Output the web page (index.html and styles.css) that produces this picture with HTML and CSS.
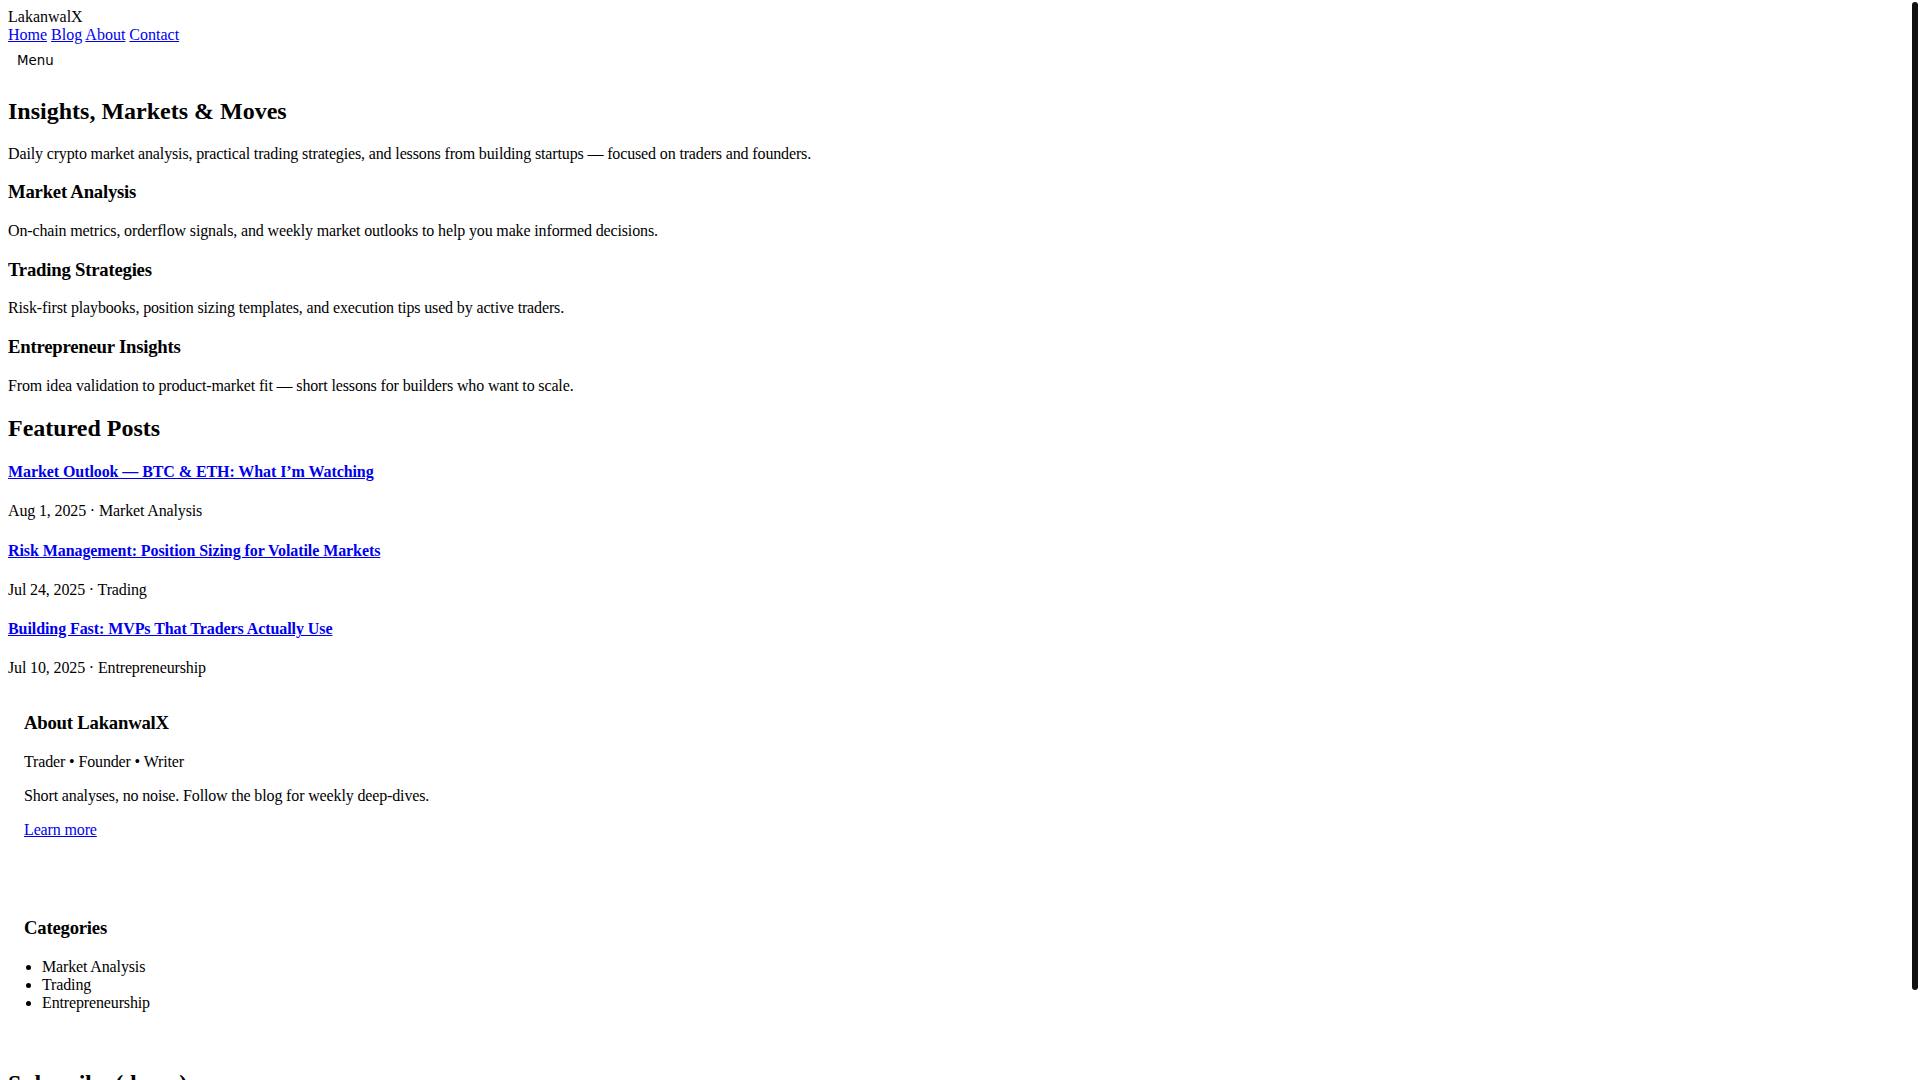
FILE: index.html
```html
<!DOCTYPE html>
<html lang="en">
<head>
<meta charset="utf-8">
<title>LakanwalX — Insights, Markets &amp; Moves</title>
<link rel="stylesheet" href="styles.css">
</head>
<body>
<header class="site-header">
  <div class="brand">LakanwalX</div>
  <nav class="site-nav"><a href="#">Home</a> <a href="#">Blog</a> <a href="#">About</a> <a href="#">Contact</a></nav>
  <button class="menu-toggle" type="button">Menu</button>
</header>

<main class="content">
  <section class="hero">
    <h1 class="hero-title">Insights, Markets &amp; Moves</h1>
    <p>Daily crypto market analysis, practical trading strategies, and lessons from building startups — focused on traders and founders.</p>
  </section>

  <section class="topics">
    <h3 class="topic-title">Market Analysis</h3>
    <p>On-chain metrics, orderflow signals, and weekly market outlooks to help you make informed decisions.</p>
    <h3 class="topic-title">Trading Strategies</h3>
    <p>Risk-first playbooks, position sizing templates, and execution tips used by active traders.</p>
    <h3 class="topic-title">Entrepreneur Insights</h3>
    <p>From idea validation to product-market fit — short lessons for builders who want to scale.</p>
  </section>

  <section class="featured">
    <h2 class="section-title">Featured Posts</h2>
    <article class="post">
      <h4 class="post-title"><a href="#">Market Outlook — BTC &amp; ETH: What I’m Watching</a></h4>
      <p class="post-meta">Aug 1, 2025 · Market Analysis</p>
    </article>
    <article class="post">
      <h4 class="post-title"><a href="#">Risk Management: Position Sizing for Volatile Markets</a></h4>
      <p class="post-meta">Jul 24, 2025 · Trading</p>
    </article>
    <article class="post">
      <h4 class="post-title"><a href="#">Building Fast: MVPs That Traders Actually Use</a></h4>
      <p class="post-meta">Jul 10, 2025 · Entrepreneurship</p>
    </article>
  </section>
</main>

<aside class="sidebar">
  <div class="widget">
    <h3 class="widget-title">About LakanwalX</h3>
    <p>Trader • Founder • Writer</p>
    <p>Short analyses, no noise. Follow the blog for weekly deep-dives.</p>
    <p><a href="#">Learn more</a></p>
  </div>
  <div class="widget">
    <h3 class="widget-title">Categories</h3>
    <ul class="category-list">
      <li>Market Analysis</li>
      <li>Trading</li>
      <li>Entrepreneurship</li>
    </ul>
  </div>
</aside>

<section class="subscribe">
  <h2 class="section-title">Subscribe (demo)</h2>
  <form class="subscribe-form">
    <input class="subscribe-input" type="email" placeholder="you@example.com">
    <button class="subscribe-button" type="button">Subscribe</button>
  </form>
</section>

<footer class="site-footer">
  <p class="copyright">© 2025 LakanwalX</p>
</footer>

<div class="scroll-thumb" aria-hidden="true"></div>
</body>
</html>
```

FILE: styles.css
```css
html {
  background: #ffffff;
}

body {
  margin: 8px;
  font-family: "Liberation Serif", "Times New Roman", serif;
  font-size: 16px;
  color: #000000;
}

p,
li {
  letter-spacing: -0.14px;
}

a {
  color: #0000ee;
}

.site-header {
  padding-bottom: 7.2px;
}

.menu-toggle {
  display: block;
  margin: 5.5px 0 0;
  padding: 1px 6px 1px 7px;
  border: 2px solid transparent;
  background: transparent;
  font-family: "DejaVu Sans", "Liberation Sans", sans-serif;
  font-size: 13.333px;
  color: #000000;
}

.hero-title {
  font-size: 24px;
  font-weight: bold;
  margin: 19.92px 0;
}

.section-title {
  font-size: 24px;
  font-weight: bold;
  margin: 19.92px 0;
}

.topic-title,
.widget-title {
  font-size: 18.72px;
  font-weight: bold;
  margin: 18.72px 0;
  letter-spacing: -0.22px;
}

.post-title {
  font-size: 16px;
  font-weight: bold;
  margin: 21.28px 0;
  letter-spacing: -0.08px;
}

.post:last-child .post-meta {
  margin-bottom: 0;
}

.sidebar {
  display: flex;
  flex-direction: column;
  gap: 12px;
  padding-bottom: 6px;
}

.widget {
  padding: 16px;
}

.category-list {
  margin: 16px 0;
  padding-left: 18px;
}

.subscribe-form {
  display: flex;
  gap: 4px;
}

.subscribe-input,
.subscribe-button {
  font-family: "DejaVu Sans", sans-serif;
  font-size: 13.333px;
}

.copyright {
  margin: 8px 0 0;
}

/* overlay scrollbar thumb visible at the right edge */
.scroll-thumb {
  position: fixed;
  top: 2px;
  right: 2px;
  width: 6px;
  height: 988px;
  background: #111111;
  border-radius: 3px;
}
```
